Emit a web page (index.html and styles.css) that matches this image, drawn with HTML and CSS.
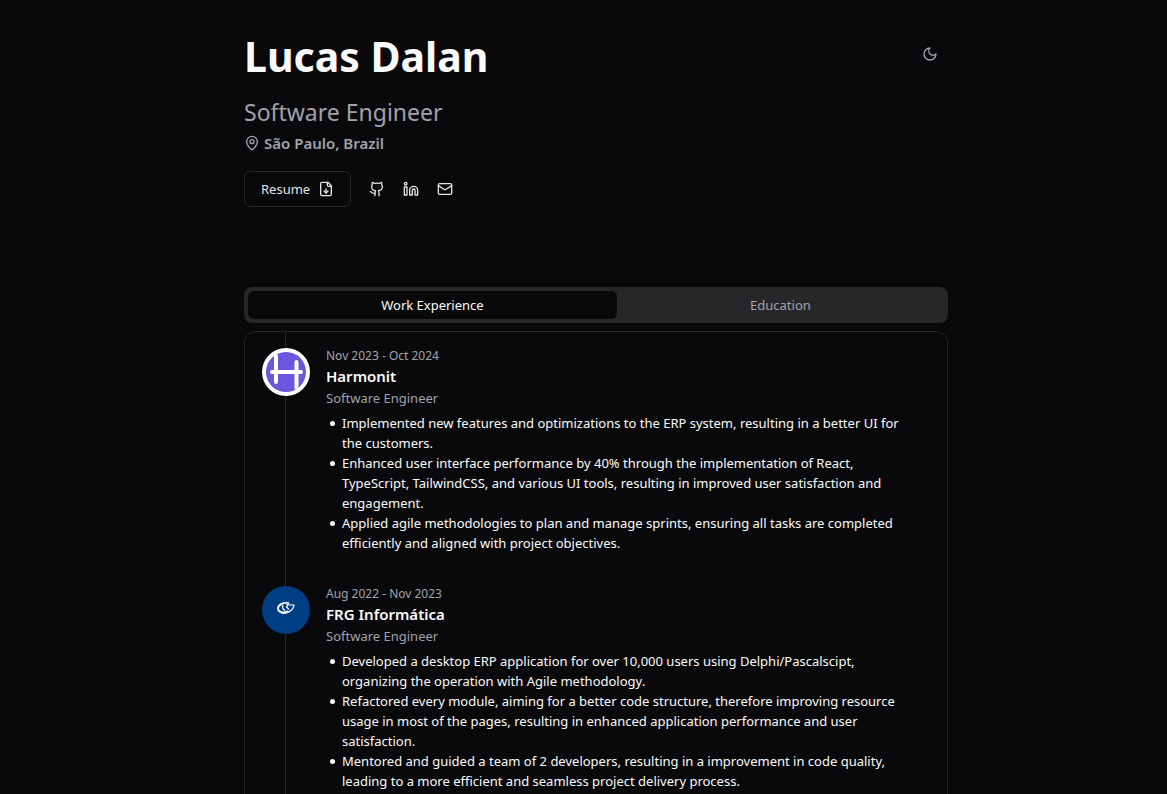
FILE: index.html
```html
<!DOCTYPE html>
<html lang="en">
<head>
<meta charset="utf-8">
<meta name="viewport" content="width=device-width, initial-scale=1">
<title>Lucas Dalan</title>
<link rel="stylesheet" href="styles.css">
</head>
<body>
<main class="page">
  <header class="hero">
    <div class="hero-top">
      <h1 class="name">Lucas Dalan</h1>
      <button class="theme-toggle" type="button" aria-label="Toggle theme">
        <svg class="icon" viewBox="0 0 24 24"><path d="M12 3a6 6 0 0 0 9 9 9 9 0 1 1-9-9Z"/></svg>
      </button>
    </div>
    <p class="headline">Software Engineer</p>
    <p class="location">
      <svg class="icon" viewBox="0 0 24 24"><path d="M20 10c0 4.993-5.539 10.193-7.399 11.799a1 1 0 0 1-1.202 0C9.539 20.193 4 14.993 4 10a8 8 0 0 1 16 0"/><circle cx="12" cy="10" r="3"/></svg>
      <span>São Paulo, Brazil</span>
    </p>
    <nav class="links" aria-label="Contact">
      <a class="resume" href="#resume">Resume
        <svg class="icon" viewBox="0 0 24 24"><path d="M15 2H6a2 2 0 0 0-2 2v16a2 2 0 0 0 2 2h12a2 2 0 0 0 2-2V7Z"/><path d="M14 2v4a2 2 0 0 0 2 2h4"/><path d="M12 18v-6"/><path d="m9 15 3 3 3-3"/></svg>
      </a>
      <a class="social" href="#github" aria-label="GitHub"><svg class="icon" viewBox="0 0 24 24"><path d="M15 22v-4a4.800 4.800 0 0 0-1-3.500c3 0 6-2 6-5.500.080-1.250-.270-2.480-1-3.500.280-1.150.280-2.350 0-3.500 0 0-1 0-3 1.500-2.640-.500-5.360-.500-8 0C6 2 5 2 5 2c-.300 1.150-.300 2.350 0 3.500A5.403 5.403 0 0 0 4 9c0 3.500 3 5.500 6 5.500-.390.490-.680 1.050-.850 1.650-.170.600-.220 1.230-.150 1.850v4"/><path d="M9 18c-4.510 2-5-2-7-2"/></svg></a>
      <a class="social" href="#linkedin" aria-label="LinkedIn"><svg class="icon" viewBox="0 0 24 24"><path d="M16 8a6 6 0 0 1 6 6v7h-4v-7a2 2 0 0 0-4 0v7h-4v-7a6 6 0 0 1 6-6z"/><path d="M2 9h4v12H2z"/><circle cx="4" cy="4" r="2"/></svg></a>
      <a class="social" href="#email" aria-label="Email"><svg class="icon" viewBox="0 0 24 24"><rect x="2" y="4" width="20" height="16" rx="2"/><path d="m22 7-8.970 5.700a1.940 1.940 0 0 1-2.060 0L2 7"/></svg></a>
    </nav>
  </header>

  <div class="tabs" role="tablist">
    <button class="tab tab-active" type="button" role="tab" aria-selected="true">Work Experience</button>
    <button class="tab" type="button" role="tab" aria-selected="false">Education</button>
  </div>

  <section class="card">
    <ol class="timeline">
      <li class="job">
        <svg class="logo" viewBox="0 0 48 48" role="img" aria-label="Harmonit">
          <circle cx="24" cy="24" r="24" fill="#fff"/><circle cx="24" cy="24" r="20" fill="#6d55dd"/>
          <path d="M14 8v26M34.500 14v26M10 24h29" fill="none" stroke="#fff" stroke-width="4" stroke-linecap="round"/>
        </svg>
        <div class="details">
          <time class="dates">Nov 2023 - Oct 2024</time>
          <h2 class="company">Harmonit</h2>
          <p class="role">Software Engineer</p>
          <ul class="points">
            <li>Implemented new features and optimizations to the ERP system, resulting in a better UI for the customers.</li>
            <li>Enhanced user interface performance by 40% through the implementation of React, TypeScript, TailwindCSS, and various UI tools, resulting in improved user satisfaction and engagement.</li>
            <li>Applied agile methodologies to plan and manage sprints, ensuring all tasks are completed efficiently and aligned with project objectives.</li>
          </ul>
        </div>
      </li>
      <li class="job">
        <svg class="logo" viewBox="0 0 48 48" role="img" aria-label="FRG Informática">
          <circle cx="24" cy="24" r="24" fill="#003e83"/>
          <path d="M27 17c-5-1-11 1.500-11 5.500 0 4 6 5 10 2.500" fill="none" stroke="#fff" stroke-width="1.700"/>
          <path d="M19 27c6 1.500 13-3 13-8.500M32 19h-5M21 19c-1 2-.500 4 2 5.500M24 18h2.500l-2 3 2.500 2.500" fill="none" stroke="#fff" stroke-width="1.200"/>
        </svg>
        <div class="details">
          <time class="dates">Aug 2022 - Nov 2023</time>
          <h2 class="company">FRG Informática</h2>
          <p class="role">Software Engineer</p>
          <ul class="points">
            <li>Developed a desktop ERP application for over 10,000 users using Delphi/Pascalscipt, organizing the operation with Agile methodology.</li>
            <li>Refactored every module, aiming for a better code structure, therefore improving resource usage in most of the pages, resulting in enhanced application performance and user satisfaction.</li>
            <li>Mentored and guided a team of 2 developers, resulting in a improvement in code quality, leading to a more efficient and seamless project delivery process.</li>
          </ul>
        </div>
      </li>
    </ol>
  </section>
</main>
</body>
</html>
```
FILE: styles.css
```css
* { box-sizing: border-box; }
html { background: #09090b; scrollbar-width: none; }
body {
  margin: 0;
  padding-left: 25px;
  color: #fafafa;
  font: 13px/20px "Noto Sans", sans-serif;
}
h1, h2, p, ul, ol { margin: 0; padding: 0; }
ol, ul { list-style: none; }
button { font: inherit; border: 0; padding: 0; background: none; cursor: pointer; }
a { color: inherit; text-decoration: none; }
.icon {
  width: 16px;
  height: 16px;
  flex: none;
  fill: none;
  stroke: currentColor;
  stroke-width: 2;
  stroke-linecap: round;
  stroke-linejoin: round;
}
.page { max-width: 704px; margin: 0 auto; padding: 32px 0; }
.hero-top { display: flex; justify-content: space-between; align-items: flex-start; }
.name { font-size: 41px; line-height: 48px; font-weight: 700; }
.theme-toggle { display: grid; place-items: center; width: 36px; height: 44px; color: #a1a1aa; }
.headline { margin-top: 16px; font-size: 23px; line-height: 32px; color: #a1a1aa; }
.location { display: flex; align-items: center; gap: 4px; margin-top: 3px; font-size: 15px; line-height: 24px; font-weight: 600; color: #a1a1aa; }
.links { display: flex; align-items: center; gap: 18px; margin-top: 16px; color: #e4e4e7; }
.resume { display: flex; align-items: center; gap: 8px; height: 36px; padding: 0 16px; border: 1px solid #27272a; border-radius: 6px; }
.social { display: flex; }
.tabs { display: flex; margin-top: 80px; padding: 4px; border-radius: 8px; background: #27272a; }
.tab { flex: 1 1 auto; height: 28px; border-radius: 6px; color: #a1a1aa; }
.tab-active { background: #09090b; color: #fafafa; }
.card { margin-top: 8px; padding: 0 16px; border: 1px solid #27272a; border-radius: 12px; }
.timeline { margin-left: 24px; border-left: 1px solid #27272a; }
.job { display: flex; gap: 16px; margin-left: -24px; padding: 16px 0 17px; }
.logo { width: 48px; height: 48px; flex: none; }
.details { flex: 1; min-width: 0; }
.dates { display: block; font-size: 12px; line-height: 16px; color: #a1a1aa; }
.company { font-size: 15px; line-height: 24px; font-weight: 600; }
.role { color: #a1a1aa; }
.points { margin-top: 5px; padding-right: 20px; }
.points li { display: flex; }
.points li::before {
  content: "";
  flex: none;
  width: 5px;
  height: 5px;
  margin: 8px 7px 0 4px;
  border-radius: 50%;
  background: currentColor;
}
```
